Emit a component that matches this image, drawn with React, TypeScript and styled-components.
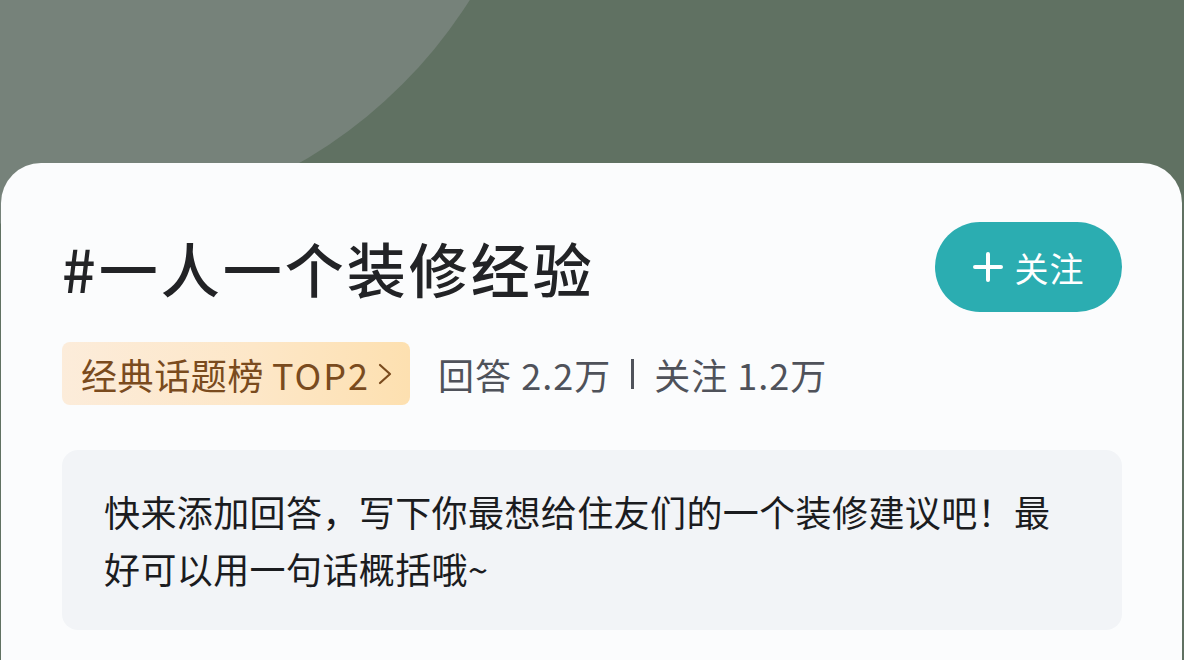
import React from "react";
import styled, { createGlobalStyle } from "styled-components";

const GlobalStyle = createGlobalStyle`
  html, body {
    margin: 0;
    padding: 0;
    background: #5f7162;
  }
  * { box-sizing: border-box; }
`;

const FONT = `"Noto Sans CJK SC", "Noto Sans", sans-serif`;

const Page = styled.div`
  position: relative;
  width: 1184px;
  height: 660px;
  overflow: hidden;
  background: #607162;
  display: flex;
  flex-direction: column;
  font-family: ${FONT};
`;

const Glow = styled.div`
  position: absolute;
  left: -429px;
  top: -747px;
  width: 974px;
  height: 974px;
  border-radius: 50%;
  background: #76827a;
`;

const Header = styled.div`
  height: 163px;
  flex-shrink: 0;
`;

const Card = styled.section`
  position: relative;
  flex: 1;
  margin: 0 2px 0 1px;
  background: #fbfcfd;
  border-radius: 40px 40px 0 0;
  padding: 59px 60px 0 61px;
  display: flex;
  flex-direction: column;
`;

const TitleRow = styled.div`
  display: flex;
  align-items: center;
  justify-content: space-between;
  height: 90px;
`;

const Title = styled.h1`
  margin: 0;
  font-family: ${FONT};
  font-size: 59px;
  font-weight: 500;
  letter-spacing: 3px;
  color: #222326;
  line-height: 1;
`;

const FollowButton = styled.button`
  width: 187px;
  height: 90px;
  border: none;
  border-radius: 45px;
  background: #2badb1;
  color: #ffffff;
  display: flex;
  align-items: center;
  justify-content: center;
  gap: 12px;
  font-family: ${FONT};
  font-size: 34px;
  letter-spacing: 1px;
  padding: 0;
  cursor: pointer;
`;

const MetaRow = styled.div`
  display: flex;
  align-items: center;
  gap: 28px;
  margin-top: 30px;
`;

const RankTag = styled.div`
  height: 63px;
  padding: 0 17px 0 19px;
  border-radius: 8px;
  background: linear-gradient(90deg, #fcecda 0%, #fde7c8 55%, #fde0b0 100%);
  color: #7a4b1e;
  font-size: 36px;
  display: flex;
  align-items: center;
  gap: 7px;
  white-space: nowrap;
`;

const TagLabel = styled.span`
  letter-spacing: 0.6px;
`;

const TagRank = styled.span`
  letter-spacing: 2px;
  margin-left: 1px;
`;

const Stats = styled.div`
  color: #4f525a;
  font-size: 36px;
  letter-spacing: 1px;
  white-space: nowrap;
  display: flex;
  align-items: center;
  gap: 20px;
`;

const Divider = styled.span`
  display: inline-block;
  width: 3px;
  height: 30px;
  background: #50535b;
`;

const PromptBox = styled.div`
  margin-top: 45px;
  background: #f2f4f7;
  border-radius: 16px;
  padding: 33px 50px 33px 42px;
  font-size: 36px;
  letter-spacing: 0.4px;
  line-height: 57px;
  color: #1b1c1f;
`;

const PlusIcon = () => (
  <svg width="30" height="30" viewBox="0 0 30 30" aria-hidden="true">
    <path d="M15 2v26M2 15h26" stroke="#fff" strokeWidth="4" strokeLinecap="round" />
  </svg>
);

const Chevron = () => (
  <svg width="16" height="28" viewBox="0 0 16 28" aria-hidden="true">
    <path d="M3 5l10 9-10 9" fill="none" stroke="#7a4b1e" strokeWidth="2.2" strokeLinecap="round" strokeLinejoin="round" />
  </svg>
);

export default function App() {
  return (
    <>
      <GlobalStyle />
      <Page>
        <Glow />
        <Header />
        <Card>
          <TitleRow>
            <Title>#一人一个装修经验</Title>
            <FollowButton>
              <PlusIcon />
              <span>关注</span>
            </FollowButton>
          </TitleRow>
          <MetaRow>
            <RankTag>
              <TagLabel>经典话题榜</TagLabel>
              <TagRank>TOP2</TagRank>
              <Chevron />
            </RankTag>
            <Stats>
              <span>回答 2.2万</span>
              <Divider />
              <span>关注 1.2万</span>
            </Stats>
          </MetaRow>
          <PromptBox>
            快来添加回答，写下你最想给住友们的一个装修建议吧！最好可以用一句话概括哦~
          </PromptBox>
        </Card>
      </Page>
    </>
  );
}
